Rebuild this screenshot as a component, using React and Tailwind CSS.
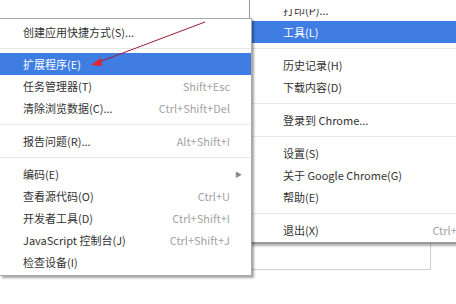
import React from 'react';

const leftItems = [
  { label: '创建应用快捷方式(S)...' },
  { sep: true, h: 'h-[10px]' },
  { label: '扩展程序(E)', active: true },
  { label: '任务管理器(T)', key: 'Shift+Esc' },
  { label: '清除浏览数据(C)...', key: 'Ctrl+Shift+Del' },
  { sep: true },
  { label: '报告问题(R)...', key: 'Alt+Shift+I' },
  { sep: true },
  { label: '编码(E)', arrow: true },
  { label: '查看源代码(O)', key: 'Ctrl+U' },
  { label: '开发者工具(D)', key: 'Ctrl+Shift+I' },
  { label: 'JavaScript 控制台(J)', key: 'Ctrl+Shift+J' },
  { label: '检查设备(I)' },
];

const rightItems = [
  { label: '打印(P)...' },
  { label: '工具(L)', active: true },
  { sep: true },
  { label: '历史记录(H)' },
  { label: '下载内容(D)' },
  { sep: true },
  { label: '登录到 Chrome...' },
  { sep: true },
  { label: '设置(S)' },
  { label: '关于 Google Chrome(G)' },
  { label: '帮助(E)' },
  { sep: true },
  { label: '退出(X)', key: 'Ctrl+Shift+Q' },
];

const Separator = ({ h }) => (
  <div className={`${h || 'h-[11px]'} flex items-center`}>
    <div className="h-px w-full bg-[#e9e9e9]" />
  </div>
);

const Row = ({ item, pad }) => (
  <div
    className={`h-[22px] flex items-center ${pad} pr-[21px] whitespace-nowrap ${
      item.active ? 'bg-[#3f7de2] text-white' : 'text-[#333]'
    }`}
  >
    <span className="flex-1">{item.label}</span>
    {item.key && <span className="text-[#a3a3a3]">{item.key}</span>}
    {item.arrow && (
      <span className="text-[#888] text-[7px] -mr-[12px]">▶</span>
    )}
  </div>
);

export default function App() {
  return (
    <div className="relative w-[456px] h-[304px] overflow-hidden bg-white font-['Noto_Sans_CJK_SC',sans-serif] text-[11px] leading-none">
      {/* window behind the menus */}
      <div className="absolute left-[240px] top-[230px] w-[191px] h-[40px] border border-[#cfcfcf]" />

      <div className="relative flex items-start">
        {/* submenu */}
        <div className="relative z-10 w-[252px] shrink-0 mt-[18px] bg-white border-t border-r border-b border-[#a9a9a9] pt-[2px] pb-[2px] shadow-[2px_2px_2px_rgba(0,0,0,0.35)]">
          {leftItems.map((item, i) =>
            item.sep ? <Separator key={i} h={item.h} /> : <Row key={i} item={item} pad="pl-[23px]" />
          )}
        </div>

        {/* main menu */}
        <div className="relative -ml-[3px] w-[267px] shrink-0 -mt-[1px] bg-white border-l border-b-2 border-[#9a9a9a] pb-[1px] shadow-[1px_2px_2px_rgba(0,0,0,0.3)]">
          <div className="absolute left-0 right-0 top-0 h-[10px] bg-white z-[1]" />
          {rightItems.map((item, i) =>
            item.sep ? <Separator key={i} /> : <Row key={i} item={item} pad="pl-[33px]" />
          )}
        </div>
      </div>

      {/* red arrow annotation */}
      <svg className="absolute left-0 top-0 z-20" width="456" height="304">
        <line x1="205" y1="22" x2="99" y2="62" stroke="#9c1c34" strokeWidth="1" />
        <polygon points="91,65 101,58 102,66" fill="#e5222e" />
      </svg>
    </div>
  );
}
